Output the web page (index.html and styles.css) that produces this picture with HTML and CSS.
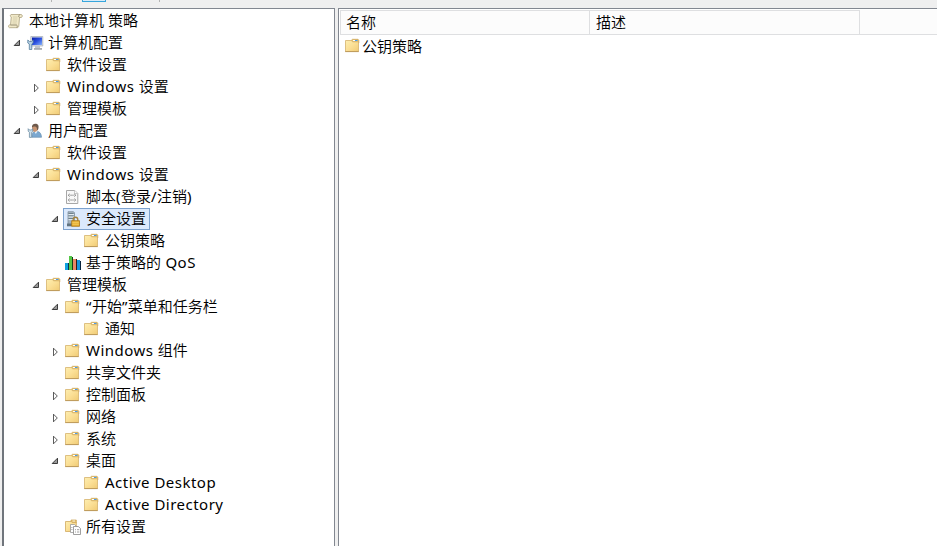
FILE: index.html
```html
<!DOCTYPE html>
<html lang="zh-CN">
<head>
<meta charset="utf-8">
<title>本地组策略编辑器</title>
<link rel="stylesheet" href="styles.css">
</head>
<body>
<svg class="defs" width="0" height="0">
  <defs>
    <linearGradient id="gold" x1="0" y1="0" x2="1" y2="1"><stop offset="0" stop-color="#fdeeb0"/><stop offset=".5" stop-color="#fbdf95"/><stop offset="1" stop-color="#f0cb75"/></linearGradient>
    <linearGradient id="blue" x1="0" y1="0" x2="1" y2="1"><stop offset="0" stop-color="#0a1fa8"/><stop offset=".5" stop-color="#2b50e0"/><stop offset="1" stop-color="#86b2fa"/></linearGradient>
    <symbol id="folder" viewBox="0 0 16 16">
      <path d="M7.5 3.5V2l1-.7h5.5l.8.8V5z" fill="#e7c46c" stroke="#c8a052" stroke-width=".7"/>
      <path d="M9 2h2.5v1H9z" fill="#fff"/><path d="M11 2h2.5v1H11z" fill="#4a9be8"/>
      <path d="M1.5 2.5h6l1 1.3h6v9.7h-13z" fill="url(#gold)" stroke="#d6b36c" stroke-width=".8"/>
      <path d="M1.2 13.6h13.5" stroke="#b99557" stroke-width=".9"/>
    </symbol>
    <symbol id="scroll" viewBox="0 0 16 16">
      <path d="M4 1.5h10.2c1.5.3 1.5 2.6 0 3H12.5l-.7 8.4c-.2 1.2-.8 1.8-1.8 1.8H2.4c-1.2-.3-1.2-2.5 0-2.8h1.1L4.3 4C3 3.6 3 2 4 1.5z" fill="#f1e9c9" stroke="#b5ac8b" stroke-width=".9"/>
      <path d="M3.5 12h6c1 .2.9 2.2.3 2.6M12.4 4.5c-1-.5-1-2.2.3-2.7" fill="none" stroke="#8d846a" stroke-width=".9"/>
      <path d="M6 4h4.5M6 6h4.3M5.7 8h4.3M5.5 10h4.2" stroke="#cfc6a4" stroke-width=".8"/>
    </symbol>
    <symbol id="computer" viewBox="0 0 16 16">
      <path d="M4.8 1.5h12v9.5h-12z" fill="#dbe1e8" stroke="#a3aab5" stroke-width=".7"/>
      <path d="M6 2.5h10v7.5H6z" fill="url(#blue)"/>
      <path d="M9 11h5v2h2v1.5H8V13h1z" fill="#c0c5cb"/><path d="M8 14h8" stroke="#8d9399"/>
      <path d="M1.8 5v3l1.5 1v5.5h2.5V9l1.3-1V5L5.6 6.5h-2z" fill="#b9d2e4" stroke="#557e9e" stroke-width=".8"/>
    </symbol>
    <symbol id="user" viewBox="0 0 16 16">
      <path d="M6 14.3c0-4.8 1.3-6 4-6 3 0 5.3 1.5 5.5 6z" fill="#7ba8d0" stroke="#6289aa" stroke-width=".6"/>
      <path d="M8.1 8l1.7 3 1.9-3z" fill="#e9f2f8"/>
      <ellipse cx="8.8" cy="5.6" rx="2.7" ry="3.3" fill="#c99572"/>
      <path d="M6 4.8C5.6 2 7.2.8 9.3.8c2.6 0 4 1.8 2.9 5.4l-1.2 1.6c.2-2.4-.3-3.8-1.9-4.2-1.3-.2-2.2.2-3.1 1.2z" fill="#6d594b"/>
      <path d="M2.2 5.7v2.5l1.2 1.2v5h2.2v-5l1.1-1.2V5.7L5.6 7H3.5z" fill="#cde0eb" stroke="#6e8da3" stroke-width=".8"/>
    </symbol>
    <symbol id="script" viewBox="0 0 16 16">
      <path d="M2.5 1.5h8.3l3 3v10H2.5z" fill="#f8f8f8" stroke="#a7a7a7"/>
      <path d="M10.5 1.5v3h3" fill="#fff" stroke="#bbb" stroke-width=".8"/>
      <path d="M5.7 5l-1.4 1.2 1.4 1.2M10.3 5l1.4 1.2-1.4 1.2M6.4 6.2H7.7M8.4 6.2h1.2M5.7 9.8l-1.4 1.2 1.4 1.2M10.3 9.8l1.4 1.2-1.4 1.2M6.4 11h1.3M8.4 11h1.2" fill="none" stroke="#666" stroke-width=".9"/>
    </symbol>
    <symbol id="security" viewBox="0 0 16 16">
      <path d="M4 .7h5.5l1 1.1v12.5H4z" fill="#a4b3bf" stroke="#8191a0" stroke-width=".8"/>
      <path d="M4.5 2.5h5M4.5 5h5M4.5 7.5h5" stroke="#61747f" stroke-width=".8"/><path d="M4.5 3.5H10M4.5 6H10M4.5 8.6H10" stroke="#e4ecf1"/>
      <path d="M3 12.5h5v2.8H3z" fill="#607381"/>
      <path d="M9.2 10V8.5c0-3 4.6-3 4.6 0V10" fill="none" stroke="#a5833e" stroke-width="1.3"/>
      <path d="M7.7 9.7h7.8v5.6H7.7z" fill="#e7ae2f" stroke="#a8761a" stroke-width=".8"/><path d="M8.3 11.3h6.5M8.3 13.2h6.5" stroke="#f7d878" stroke-width=".7"/>
    </symbol>
    <symbol id="bars" viewBox="0 0 16 16">
      <path d="M1 8h3v7H1z" fill="#10a2e0"/><path d="M4 8h1v7H4z" fill="#08304f"/>
      <path d="M5 1h3v14H5z" fill="#55c747"/><path d="M8 2h1v13H8z" fill="#123f18"/>
      <path d="M9 4h3v11H9z" fill="#e88665"/><path d="M12 4h1v11h-1z" fill="#3a1b14"/>
      <path d="M13 5h3v10h-3z" fill="#1595dd"/><path d="M16 6h1v9h-1z" fill="#07243f"/>
    </symbol>
    <symbol id="all" viewBox="0 0 16 16">
      <path d="M7 3V1h5.3v3z" fill="#e7c46c" stroke="#c8a052" stroke-width=".7"/><path d="M8.5 2H11" stroke="#fff" stroke-width=".8"/>
      <path d="M1.5 2.5H7l1 1h4.3v9H1.5z" fill="url(#gold)" stroke="#d0aa60" stroke-width=".8"/>
      <path d="M6.5 5.5h4l2 2v6h-6z" fill="#fff" stroke="#999" stroke-width=".8"/>
      <path d="M9.5 7.5h4.8l2.2 2v6h-7z" fill="#fff" stroke="#888" stroke-width=".8"/>
      <path d="M7.4 8.5h1M7.4 10.5h1M11 10.7h1M13 10.7h2.3M11 13h1M13 13h2.3" stroke="#888" stroke-width=".8"/>
    </symbol>
    <symbol id="open" viewBox="0 0 16 16"><path d="M9.5 5.2v5.3H4.2z" fill="#999" stroke="#2c2c2c" stroke-width=".9"/></symbol>
    <symbol id="closed" viewBox="0 0 16 16"><path d="M5.5 5.2v7.6L9.3 9z" fill="#fff" stroke="#333" stroke-width=".8"/></symbol>
  </defs>
</svg>
<div class="window">
  <div class="toolbar"><i class="sep"></i><i class="active-tool"></i><i class="sep"></i></div>
  <div class="panes">
    <nav class="tree">
      <div class="row d0"><svg class="arrow"></svg><div class="item"><svg class="icon"><use href="#scroll"/></svg><span>本地计算机 策略</span></div></div>
      <div class="row d1"><svg class="arrow"><use href="#open"/></svg><div class="item"><svg class="icon"><use href="#computer"/></svg><span>计算机配置</span></div></div>
      <div class="row d2"><svg class="arrow"></svg><div class="item"><svg class="icon"><use href="#folder"/></svg><span>软件设置</span></div></div>
      <div class="row d2"><svg class="arrow"><use href="#closed"/></svg><div class="item"><svg class="icon"><use href="#folder"/></svg><span><span class="latin">Windows </span>设置</span></div></div>
      <div class="row d2"><svg class="arrow"><use href="#closed"/></svg><div class="item"><svg class="icon"><use href="#folder"/></svg><span>管理模板</span></div></div>
      <div class="row d1"><svg class="arrow"><use href="#open"/></svg><div class="item"><svg class="icon"><use href="#user"/></svg><span>用户配置</span></div></div>
      <div class="row d2"><svg class="arrow"></svg><div class="item"><svg class="icon"><use href="#folder"/></svg><span>软件设置</span></div></div>
      <div class="row d2"><svg class="arrow"><use href="#open"/></svg><div class="item"><svg class="icon"><use href="#folder"/></svg><span><span class="latin">Windows </span>设置</span></div></div>
      <div class="row d3"><svg class="arrow"></svg><div class="item"><svg class="icon"><use href="#script"/></svg><span>脚本<span class="latin">(</span>登录<span class="latin">/</span>注销<span class="latin">)</span></span></div></div>
      <div class="row d3"><svg class="arrow"><use href="#open"/></svg><div class="item selected"><svg class="icon"><use href="#security"/></svg><span>安全设置</span></div></div>
      <div class="row d4"><svg class="arrow"></svg><div class="item"><svg class="icon"><use href="#folder"/></svg><span>公钥策略</span></div></div>
      <div class="row d3"><svg class="arrow"></svg><div class="item"><svg class="icon"><use href="#bars"/></svg><span>基于策略的<span class="latin"> QoS</span></span></div></div>
      <div class="row d2"><svg class="arrow"><use href="#open"/></svg><div class="item"><svg class="icon"><use href="#folder"/></svg><span>管理模板</span></div></div>
      <div class="row d3"><svg class="arrow"><use href="#open"/></svg><div class="item"><svg class="icon"><use href="#folder"/></svg><span><span class="latin">“</span>开始<span class="latin">”</span>菜单和任务栏</span></div></div>
      <div class="row d4"><svg class="arrow"></svg><div class="item"><svg class="icon"><use href="#folder"/></svg><span>通知</span></div></div>
      <div class="row d3"><svg class="arrow"><use href="#closed"/></svg><div class="item"><svg class="icon"><use href="#folder"/></svg><span><span class="latin">Windows </span>组件</span></div></div>
      <div class="row d3"><svg class="arrow"></svg><div class="item"><svg class="icon"><use href="#folder"/></svg><span>共享文件夹</span></div></div>
      <div class="row d3"><svg class="arrow"><use href="#closed"/></svg><div class="item"><svg class="icon"><use href="#folder"/></svg><span>控制面板</span></div></div>
      <div class="row d3"><svg class="arrow"><use href="#closed"/></svg><div class="item"><svg class="icon"><use href="#folder"/></svg><span>网络</span></div></div>
      <div class="row d3"><svg class="arrow"><use href="#closed"/></svg><div class="item"><svg class="icon"><use href="#folder"/></svg><span>系统</span></div></div>
      <div class="row d3"><svg class="arrow"><use href="#open"/></svg><div class="item"><svg class="icon"><use href="#folder"/></svg><span>桌面</span></div></div>
      <div class="row d4"><svg class="arrow"></svg><div class="item"><svg class="icon"><use href="#folder"/></svg><span class="latin">Active Desktop</span></div></div>
      <div class="row d4"><svg class="arrow"></svg><div class="item"><svg class="icon"><use href="#folder"/></svg><span class="latin">Active Directory</span></div></div>
      <div class="row d3"><svg class="arrow"></svg><div class="item"><svg class="icon"><use href="#all"/></svg><span>所有设置</span></div></div>
    </nav>
    <main class="list">
      <div class="head"><div class="col name">名称</div><div class="col desc">描述</div></div>
      <div class="entry"><svg class="icon"><use href="#folder"/></svg><span>公钥策略</span></div>
    </main>
  </div>
</div>
</body>
</html>
```
FILE: styles.css
```css
* { box-sizing: border-box; }
body {
  margin: 0;
  overflow: hidden;
  background: #efefef;
  color: #000;
  font: 350 15px/22px "Noto Sans", "Noto Sans CJK SC", sans-serif;
}
.latin { font-weight: 400; letter-spacing: .48px; }
.defs { display: block; }
.window { height: 546px; display: flex; flex-direction: column; }
.toolbar { height: 8px; display: flex; align-items: flex-start; padding-left: 51px; }
.sep { width: 1px; height: 2px; background: #b4b4b4; }
.active-tool {
  width: 24px;
  height: 2px;
  margin: 0 53px 0 30px;
  background: #d6eaf8;
  border: solid #37a5dc;
  border-width: 0 1px 1px;
}
.panes { flex: 1; min-height: 0; display: flex; gap: 3px; padding-left: 2px; }
.tree {
  width: 333px;
  padding-top: 1px;
  overflow: hidden;
  background: #fff;
  border: solid #828790;
  border-width: 1px 1px 0 2px;
  border-left-color: #70757c;
}
.row { height: 22px; display: flex; white-space: nowrap; }
.d0 { margin-left: -13px; }
.d1 { margin-left: 6px; }
.d2 { margin-left: 25px; }
.d3 { margin-left: 44px; }
.d4 { margin-left: 63px; }
.arrow { width: 16px; height: 16px; margin: 3px -1px 0 0; flex: none; }
.item { height: 22px; display: flex; padding-right: 3px; border: 1px solid transparent; line-height: 19px; }
.icon { width: 16px; height: 16px; margin: 2px 6px 0 0; flex: none; overflow: visible; }
symbol { overflow: visible; }
.item.selected { background: #dbe9fc; border-color: #7da2ce; }
.list {
  flex: 1;
  overflow: hidden;
  background: #fff;
  border: solid #828790;
  border-width: 1px 0 0 1px;
  padding: 1px 0 0 1px;
}
.head { height: 25px; display: flex; background: #fcfcfc; border-bottom: 1px solid #dedfe1; }
.col { padding-left: 6px; line-height: 22px; border: solid #dedfe1; border-width: 1px 1px 0 0; }
.name { width: 250px; border-left-width: 1px; padding-left: 5px; }
.desc { width: 270px; }
.entry { height: 22px; display: flex; padding-left: 4px; line-height: 22px; }
.entry .icon { margin: 3px 2px 0 0; }
```
